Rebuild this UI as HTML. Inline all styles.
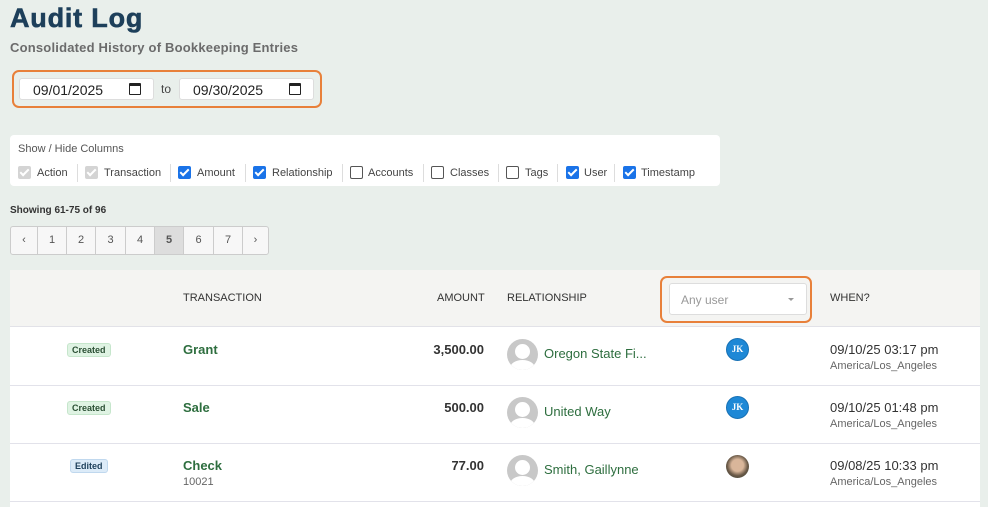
<!DOCTYPE html>
<html><head><style>
*{box-sizing:border-box;margin:0;padding:0}
body{width:988px;height:507px;overflow:hidden;background:#e9efeb;font-family:"Liberation Sans",sans-serif;position:relative;color:#333}
.a{position:absolute}
h1{position:absolute;left:10px;top:3px;font-size:27px;font-weight:bold;color:#1d3f5a;letter-spacing:0.8px;-webkit-text-stroke:0.6px #1d3f5a}
.sub{left:10px;top:40px;font-size:13px;font-weight:bold;color:#6b6b6b;letter-spacing:0.2px}
.dr{left:12px;top:70px;width:310px;height:38px;border:2.5px solid #e8803a;border-radius:7px}
.di{top:78px;height:22px;background:#fff;border:1px solid #ddd;border-radius:3px;font-size:14px;padding:3px 0 0 13px;color:#222}
.cal{position:absolute;right:12px;top:4px;width:12px;height:12px;border:1.5px solid #222;border-top-width:3px;border-radius:1px}
.cols{left:10px;top:135px;width:710px;height:51px;background:#fff;border-radius:4px}
.cb{position:absolute;top:166px;width:13px;height:13px;border-radius:2px}
.on{background:#1a73e8}
.on::after{content:"";position:absolute;left:4px;top:1px;width:3px;height:7px;border:solid #fff;border-width:0 2px 2px 0;transform:rotate(45deg)}
.dis{background:#d4d4d4}
.dis::after{content:"";position:absolute;left:4px;top:1px;width:3px;height:7px;border:solid #fff;border-width:0 2px 2px 0;transform:rotate(45deg)}
.off{border:1px solid #555;background:#fff}
.lb{position:absolute;top:167px;font-size:11px;color:#444}
.sep{position:absolute;top:164px;width:1px;height:18px;background:#ddd}
.pg{left:10px;top:226px;height:29px;display:flex;border:1px solid #ccc;border-radius:3px;background:#f7f7f7;overflow:hidden}
.pg div{border-left:1px solid #ccc;height:27px;font-size:11px;text-align:center;line-height:27px;color:#555}
.tbl{left:10px;top:270px;width:970px;height:237px;background:#fff}
.hd{left:10px;top:270px;width:970px;height:57px;background:#f4f4f2;border-bottom:1px solid #e2e2e8}
.th{position:absolute;top:292px;font-size:11px;color:#333}
.line{position:absolute;left:10px;width:970px;height:1px;background:#e2e2ea}
.badge{position:absolute;font-size:9px;font-weight:bold;padding:1px 4px;border-radius:3px}
.cr{background:#dff3e3;border:1px solid #c6e6cc;color:#2b4f34}
.ed{background:#dcebf8;border:1px solid #c0d8ee;color:#1d3f5a}
.tx{position:absolute;left:183px;font-size:13px;font-weight:bold;color:#2e6e3f}
.amt{position:absolute;right:504px;font-size:13px;font-weight:bold;color:#333}
.av{position:absolute;left:507px;width:31px;height:31px;border-radius:50%;background:#c8c8c8;overflow:hidden}
.av::before{content:"";position:absolute;left:8px;top:5px;width:15px;height:15px;border-radius:50%;background:#fff}
.av::after{content:"";position:absolute;left:3px;top:21px;width:25px;height:16px;border-radius:50%;background:#fff}
.rel{position:absolute;left:544px;font-size:13px;color:#2e6e3f}
.jk{position:absolute;left:726px;width:23px;height:23px;border-radius:50%;background:#1e88d6;color:#fff;font-family:"Liberation Serif",serif;font-weight:bold;font-size:9px;text-align:center;line-height:21px;border:1px solid #1771b5}
.dt{position:absolute;left:830px;font-size:13px;color:#333}
.tz{position:absolute;left:830px;font-size:11px;color:#666}
</style></head><body>
<h1>Audit Log</h1>
<div class="a sub">Consolidated History of Bookkeeping Entries</div>
<div class="a dr"></div>
<div class="a di" style="left:19px;width:135px">09/01/2025<span class="cal"></span></div>
<div class="a" style="left:161px;top:82px;font-size:12px;color:#444">to</div>
<div class="a di" style="left:179px;width:135px">09/30/2025<span class="cal"></span></div>
<div class="a cols"><div style="position:absolute;left:8px;top:8px;font-size:11px;color:#555">Show / Hide Columns</div></div>
<div class="cb dis" style="left:18px"></div><div class="lb" style="left:37px">Action</div><div class="sep" style="left:77px"></div>
<div class="cb dis" style="left:85px"></div><div class="lb" style="left:104px">Transaction</div><div class="sep" style="left:170px"></div>
<div class="cb on" style="left:178px"></div><div class="lb" style="left:197px">Amount</div><div class="sep" style="left:245px"></div>
<div class="cb on" style="left:253px"></div><div class="lb" style="left:272px">Relationship</div><div class="sep" style="left:342px"></div>
<div class="cb off" style="left:350px"></div><div class="lb" style="left:368px">Accounts</div><div class="sep" style="left:423px"></div>
<div class="cb off" style="left:431px"></div><div class="lb" style="left:450px">Classes</div><div class="sep" style="left:498px"></div>
<div class="cb off" style="left:506px"></div><div class="lb" style="left:525px">Tags</div><div class="sep" style="left:557px"></div>
<div class="cb on" style="left:566px"></div><div class="lb" style="left:584px">User</div><div class="sep" style="left:614px"></div>
<div class="cb on" style="left:623px"></div><div class="lb" style="left:641px">Timestamp</div>
<div class="a" style="left:10px;top:205px;font-size:10px;font-weight:bold;color:#333">Showing 61-75 of 96</div>
<div class="a pg"><div style="width:26px;border:0">‹</div><div style="width:29px">1</div><div style="width:29px">2</div><div style="width:30px">3</div><div style="width:29px">4</div><div style="width:29px;background:#ddd;font-weight:bold">5</div><div style="width:30px">6</div><div style="width:29px">7</div><div style="width:26px">›</div></div>
<div class="a tbl"></div>
<div class="a hd"></div>
<div class="th" style="left:183px">TRANSACTION</div>
<div class="th" style="left:437px">AMOUNT</div>
<div class="th" style="left:507px">RELATIONSHIP</div>
<div class="th" style="left:830px">WHEN?</div>
<div class="a" style="left:660px;top:276px;width:152px;height:47px;border:2.5px solid #e8803a;border-radius:7px"></div>
<div class="a" style="left:669px;top:283px;width:138px;height:32px;background:#fff;border:1px solid #ddd;border-radius:3px;font-size:12px;color:#999;padding:9px 0 0 11px">Any user<span style="position:absolute;right:12px;top:14px;border:3px solid transparent;border-top:3px solid #999"></span></div>
<div class="line" style="top:385px"></div><div class="line" style="top:443px"></div><div class="line" style="top:501px"></div>

<div class="badge cr" style="left:67px;top:343px">Created</div>
<div class="tx" style="top:342px">Grant</div>
<div class="amt" style="top:342px">3,500.00</div>
<div class="av" style="top:339px"></div><div class="rel" style="top:346px">Oregon State Fi...</div>
<div class="jk" style="top:338px">JK</div>
<div class="dt" style="top:342px">09/10/25 03:17 pm</div><div class="tz" style="top:360px">America/Los_Angeles</div>

<div class="badge cr" style="left:67px;top:401px">Created</div>
<div class="tx" style="top:400px">Sale</div>
<div class="amt" style="top:400px">500.00</div>
<div class="av" style="top:397px"></div><div class="rel" style="top:404px">United Way</div>
<div class="jk" style="top:396px">JK</div>
<div class="dt" style="top:400px">09/10/25 01:48 pm</div><div class="tz" style="top:418px">America/Los_Angeles</div>

<div class="badge ed" style="left:70px;top:459px">Edited</div>
<div class="tx" style="top:458px">Check</div>
<div class="a" style="left:183px;top:476px;font-size:11px;color:#666">10021</div>
<div class="amt" style="top:458px">77.00</div>
<div class="av" style="top:455px"></div><div class="rel" style="top:462px">Smith, Gaillynne</div>
<div class="a" style="left:726px;top:455px;width:23px;height:23px;border-radius:50%;background:radial-gradient(circle at 50% 45%,#d9b69a 0 35%,#6b5a48 60%,#2f3a30 100%)"></div>
<div class="dt" style="top:458px">09/08/25 10:33 pm</div><div class="tz" style="top:476px">America/Los_Angeles</div>
</body></html>
